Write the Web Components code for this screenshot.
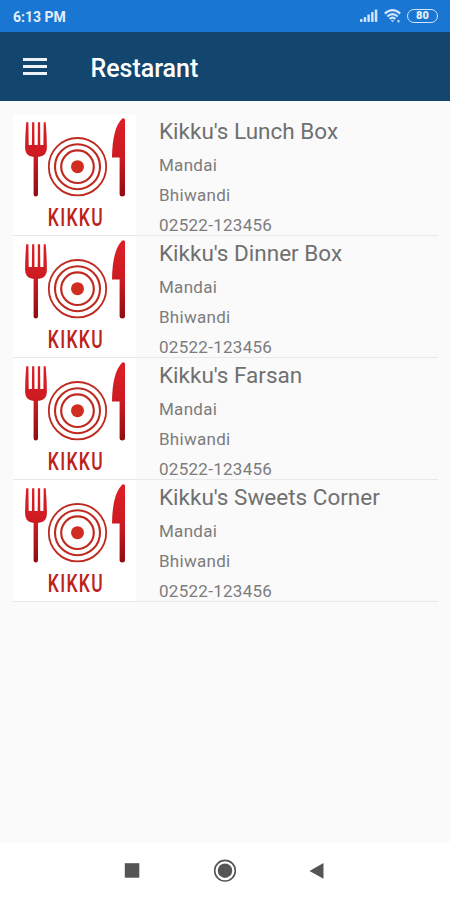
<!DOCTYPE html>
<html lang="en">
<head>
<meta charset="utf-8">
<title>Restarant</title>
<style>
  html, body {
    margin: 0;
    height: 100%;
    background: #fafafa;
    font-family: Roboto, "Liberation Sans", sans-serif;
  }
</style>
</head>
<body>
<restaurant-screen></restaurant-screen>

<script>
/**
 * Base for the small display-only components: renders its template once.
 */
class BaseElement extends HTMLElement {
  constructor() {
    super();
    this.attachShadow({ mode: 'open' });
  }

  connectedCallback() {
    const template = document.createElement('template');
    template.innerHTML = this.getTemplate();
    this.shadowRoot.replaceChildren(template.content.cloneNode(true));
  }
}

/**
 * StatusBar - time on the left, signal / wifi / battery on the right
 */
class StatusBar extends BaseElement {
  getTemplate() {
    return `
      <style>
        :host {
          display: flex;
          align-items: center;
          justify-content: space-between;
          box-sizing: border-box;
          height: 32px;
          padding: 0 12px 0 13px;
          background: #1976d2;
          color: #e3effc;
        }

        .time {
          padding-top: 1px;
          font-size: 14px;
          font-weight: 700;
          line-height: 16px;
        }

        .icons {
          display: flex;
          align-items: center;
          gap: 6px;
        }

        svg {
          display: block;
        }

        .battery {
          box-sizing: border-box;
          width: 31px;
          height: 14px;
          border: 1.5px solid #d3e5f8;
          border-radius: 7px;
          font-size: 11px;
          font-weight: 900;
          line-height: 12px;
          text-align: center;
        }
      </style>
      <span class="time"><slot></slot></span>
      <div class="icons">
        <svg width="18" height="14" viewBox="0 0 18 14" fill="#d3e5f8">
          <rect x="0" y="10" width="2.5" height="3" rx=".8"/>
          <rect x="3.7" y="8" width="2.5" height="5" rx=".8"/>
          <rect x="7.4" y="5.5" width="2.5" height="7.5" rx=".8"/>
          <rect x="11.1" y="3" width="2.5" height="10" rx=".8"/>
          <rect x="14.8" y="0.5" width="2.5" height="12.5" rx=".8"/>
        </svg>
        <svg width="17" height="14" viewBox="0 0 17 14" fill="none" stroke="#d3e5f8" stroke-width="2.1">
          <path d="M.8 4.6Q8.5-2.3 16.2 4.6"/>
          <path d="M3.3 7.5Q8.5 2.6 13.7 7.5"/>
          <path d="M5.7 10.1Q8.5 7.3 11.3 10.1"/>
          <path d="M6.8 11.3h3.4L8.5 13.2z" fill="#d3e5f8" stroke="none"/>
          <path d="M14.5 11v2.4" stroke-width="1.8"/>
        </svg>
        <div class="battery">80</div>
      </div>
    `;
  }
}

/**
 * AppBar - hamburger button and screen title
 */
class AppBar extends BaseElement {
  getTemplate() {
    return `
      <style>
        :host {
          display: flex;
          align-items: center;
          box-sizing: border-box;
          height: 69px;
          padding: 0 24px 0 23.4px;
          gap: 43px;
          background: #13466f;
          color: #fff;
        }

        .menu {
          display: flex;
          flex-direction: column;
          gap: 4px;
          width: 24px;
        }

        .menu span {
          height: 3px;
          background: #edf2f8;
        }

        h1 {
          margin: 4px 0 0;
          font-size: 25px;
          font-weight: 500;
          line-height: 28px;
        }
      </style>
      <div class="menu"><span></span><span></span><span></span></div>
      <h1><slot></slot></h1>
    `;
  }
}

/**
 * KikkuLogo - fork, plate and knife above the brand name
 */
class KikkuLogo extends BaseElement {
  getTemplate() {
    return `
      <style>
        :host {
          display: block;
          width: 123px;
          height: 121px;
          background: #fff;
        }

        svg {
          display: block;
        }

        text {
          font-family: Roboto, sans-serif;
          font-size: 26.5px;
          font-weight: 500;
          letter-spacing: 2px;
        }
      </style>
      <svg width="123" height="121" viewBox="0 0 123 121">
        <defs>
          <linearGradient id="metal" x1="0" y1="8" x2="0" y2="83" gradientUnits="userSpaceOnUse">
            <stop offset="0" stop-color="#dc1f26"/>
            <stop offset=".5" stop-color="#cb1a21"/>
            <stop offset="1" stop-color="#8e0d12"/>
          </linearGradient>
        </defs>
        <g fill="url(#metal)">
          <path d="M13.2 8.2h2.2l.3 22.8h3.2l.2-22.800h2.200l.2 22.800h3.200l.2-22.800h2.200l.2 22.800h3.100l.3-22.800h2
            q1.200 14 1.200 25.500q0 8-7.500 9H25V80.500q0 2-2.200 2t-2.200-2V42.700h-1.200q-7.300-1-7.300-9q0-11.500 1.100-25.500z"/>
          <path d="M112 5.500V80.500q0 2-2.700 2t-2.700-2V43.500H99q.3-29 10-38.700q1.600-1.400 3 .7z"/>
        </g>
        <g fill="none" stroke="#bf2a20">
          <circle cx="64.5" cy="52.7" r="28.7" stroke-width="1.8"/>
          <circle cx="64.5" cy="52.7" r="22.5" stroke-width="2.1"/>
          <circle cx="64.5" cy="52.7" r="16.3" stroke-width="2.2"/>
        </g>
        <circle cx="64.5" cy="52.7" r="6.5" fill="#d02c20"/>
        <text transform="translate(34.8 111.800) scale(.66 1)" fill="#bd2218">KIKKU</text>
      </svg>
    `;
  }
}

/**
 * RestaurantItem - one row of the list
 * Attributes: name, area, city, phone
 */
class RestaurantItem extends BaseElement {
  getTemplate() {
    return `
      <style>
        :host {
          display: flex;
          gap: 23px;
          box-sizing: border-box;
          height: 121.9px;
          border-bottom: 1px solid #e9e9e9;
          color: #7c7c7c;
          white-space: nowrap;
        }

        .details {
          display: flex;
          flex-direction: column;
          font-size: 17px;
          line-height: 30px;
          letter-spacing: 0.28px;
        }

        .name {
          margin-bottom: 2px;
          font-size: 22.5px;
          line-height: 34px;
          letter-spacing: 0;
          color: #707070;
        }

        .details div:last-child {
          height: 25px;
        }
      </style>
      <kikku-logo></kikku-logo>
      <div class="details">
        <div class="name">${this.getAttribute('name')}</div>
        <div>${this.getAttribute('area')}</div>
        <div>${this.getAttribute('city')}</div>
        <div>${this.getAttribute('phone')}</div>
      </div>
    `;
  }
}

/**
 * NavBar - recents, home and back buttons
 */
class NavBar extends BaseElement {
  getTemplate() {
    return `
      <style>
        :host {
          display: flex;
          align-items: center;
          justify-content: center;
          gap: 69px;
          height: 58px;
          background: #fff;
        }

        svg {
          display: block;
        }
      </style>
      <svg width="24" height="24" viewBox="0 0 24 24" fill="#555"><rect x="4.8" y="4.2" width="14.5" height="14.5"/></svg>
      <svg width="24" height="24" viewBox="0 0 24 24">
        <circle cx="12" cy="11.7" r="10.3" fill="none" stroke="#555" stroke-width="1.6"/>
        <circle cx="12" cy="11.7" r="7.2" fill="#555"/>
      </svg>
      <svg width="24" height="24" viewBox="0 0 24 24" fill="#555"><path d="M3.5 12L17.500 4v15.800z"/></svg>
    `;
  }
}

class RestaurantScreen extends BaseElement {
  getTemplate() {
    return `
      <style>
        :host {
          display: flex;
          flex-direction: column;
          height: 900px;
        }

        main {
          flex: 1;
          padding: 13px 12px 0 13px;
          background: #fafafa;
        }
      </style>
      <status-bar>6:13 PM</status-bar>
      <app-bar>Restarant</app-bar>
      <main>
        <restaurant-item name="Kikku's Lunch Box" area="Mandai" city="Bhiwandi" phone="02522-123456"></restaurant-item>
        <restaurant-item name="Kikku's Dinner Box" area="Mandai" city="Bhiwandi" phone="02522-123456"></restaurant-item>
        <restaurant-item name="Kikku's Farsan" area="Mandai" city="Bhiwandi" phone="02522-123456"></restaurant-item>
        <restaurant-item name="Kikku's Sweets Corner" area="Mandai" city="Bhiwandi" phone="02522-123456"></restaurant-item>
      </main>
      <nav-bar></nav-bar>
    `;
  }
}

customElements.define('status-bar', StatusBar);
customElements.define('app-bar', AppBar);
customElements.define('kikku-logo', KikkuLogo);
customElements.define('restaurant-item', RestaurantItem);
customElements.define('nav-bar', NavBar);
customElements.define('restaurant-screen', RestaurantScreen);
</script>
</body>
</html>
